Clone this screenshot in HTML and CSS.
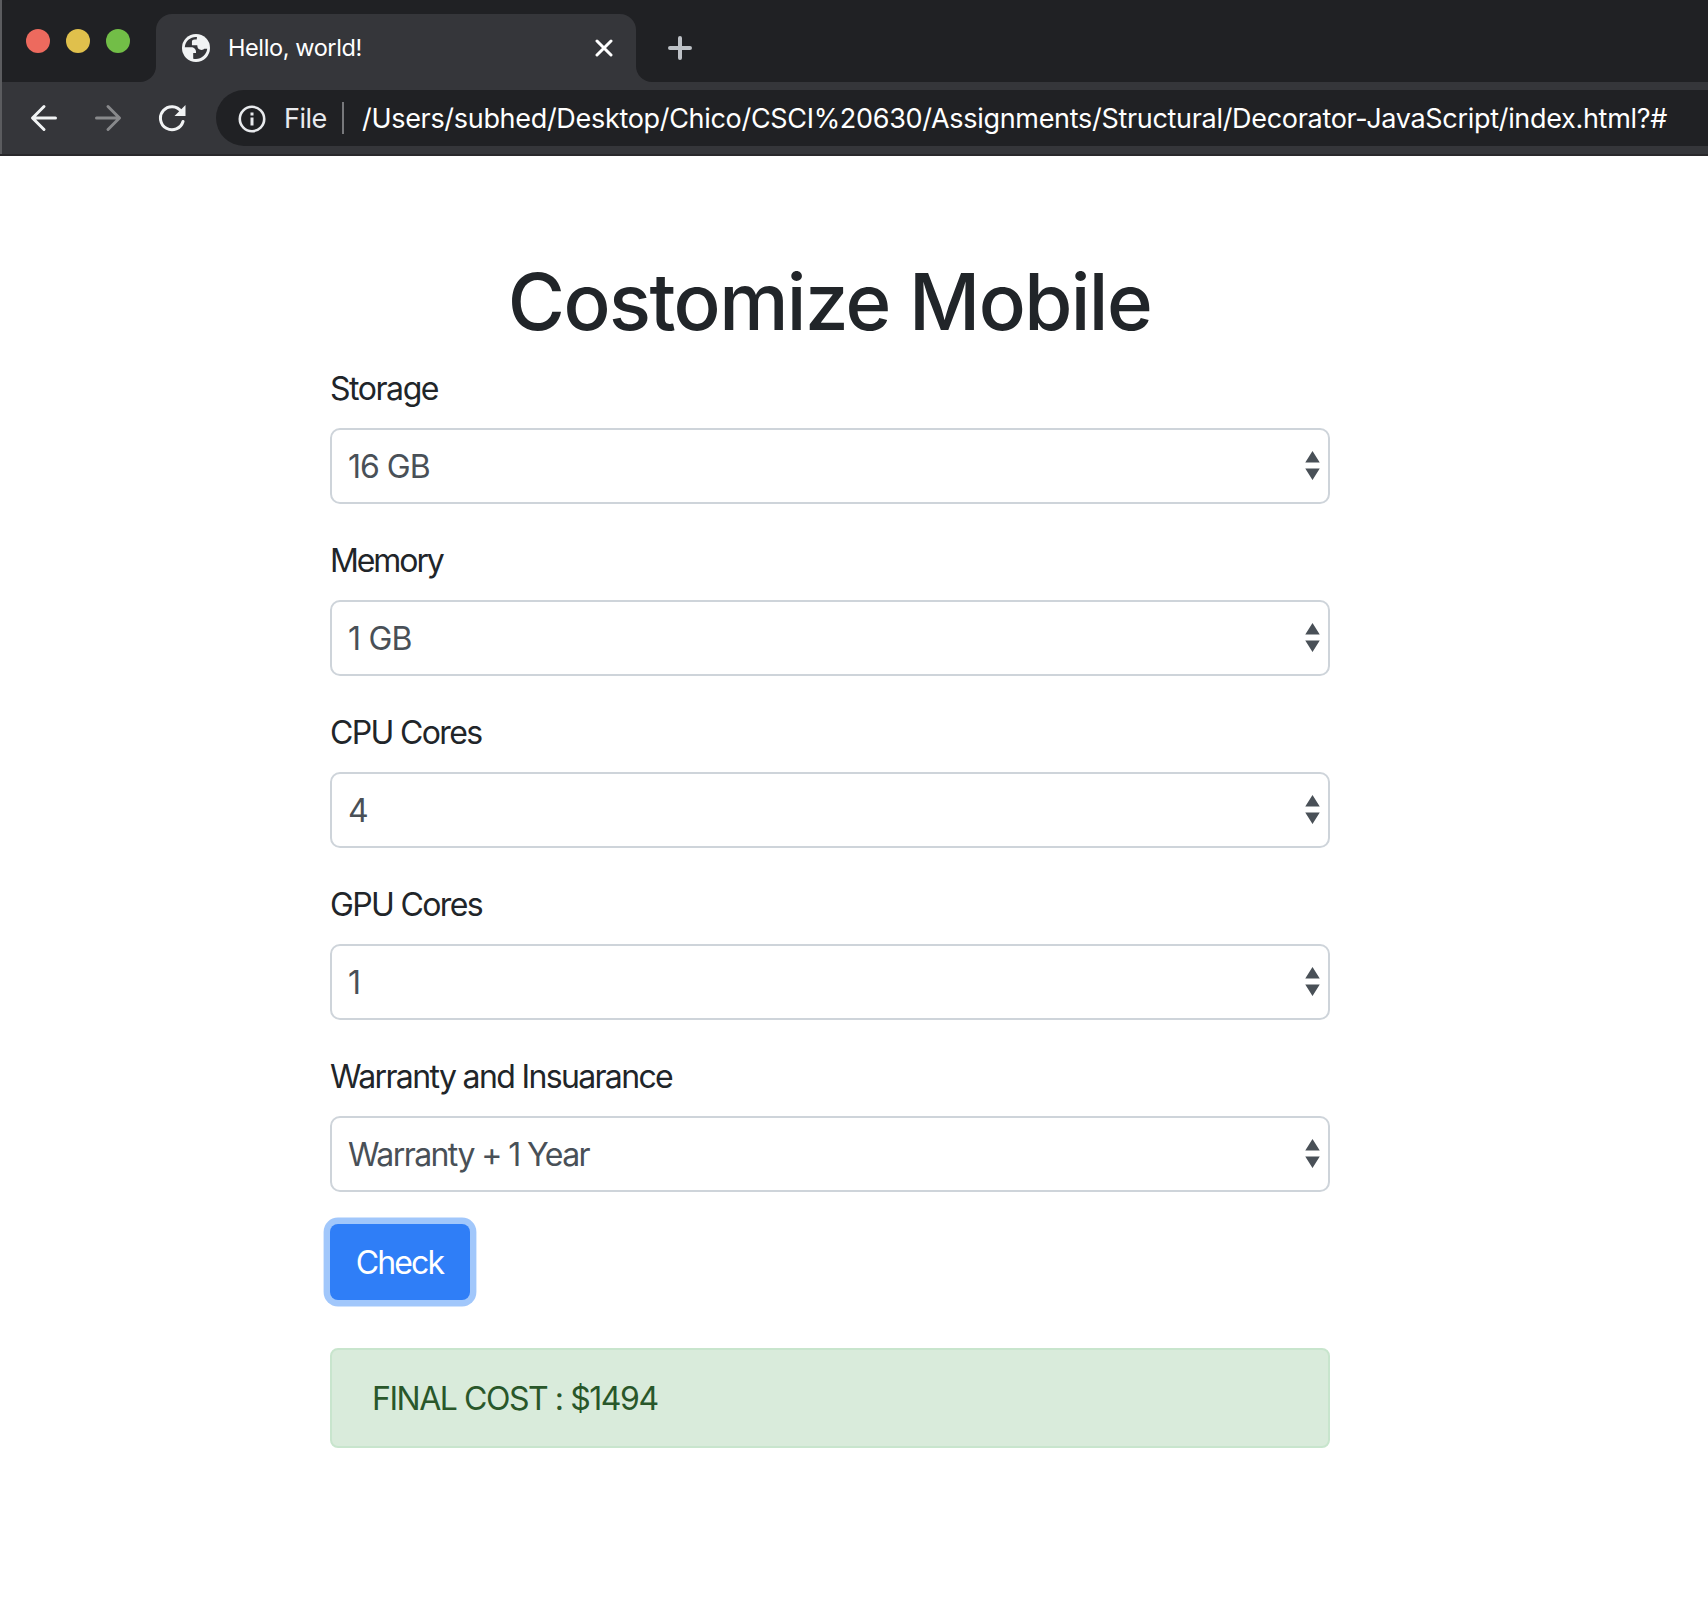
FILE: index.html
```html
<!DOCTYPE html>
<html lang="en">
<head>
<meta charset="utf-8">
<title>Hello, world!</title>
<link rel="stylesheet" href="styles.css">
</head>
<body>
<header class="browser">
  <div class="tabstrip">
    <div class="lights"><span class="light red"></span><span class="light yellow"></span><span class="light green"></span></div>
    <div class="tab">
      <svg class="globe" viewBox="2 2 20 20"><circle cx="12" cy="12" r="10" fill="#f1f3f4"/><path fill="#35363a" d="M12.700 4.100C8.300 3.700 4.400 6.800 4 11.400h4.500c2 0 3.500 1.300 3.500 3.200v1h-2v4c4.600 1.200 9.500-2 10-7h-2.100c-.4.500-1 .8-1.900.8-2 0-3.100-1-3.100-3.300H9.100V7.400c0-1 .8-1.500 2-1.500h1.400z"/></svg>
      <span class="tab-title">Hello, world!</span>
      <svg class="close" viewBox="0 0 18 18"><path d="M2 2l14 14M16 2L2 16" stroke="#fff" stroke-width="3" stroke-linecap="round"/></svg>
    </div>
    <svg class="plus" viewBox="0 0 24 24"><path d="M12 2v20M2 12h20" stroke="#bdc1c6" stroke-width="4" stroke-linecap="round"/></svg>
  </div>
  <div class="toolbar">
    <svg class="nav" viewBox="0 0 28 28"><path d="M25.500 14H3M14 2.500L2.500 14 14 25.500" fill="none" stroke="#f1f3f4" stroke-width="3" stroke-linecap="round" stroke-linejoin="round"/></svg>
    <svg class="nav" viewBox="0 0 28 28"><path d="M2.500 14H25M14 2.500L25.500 14 14 25.500" fill="none" stroke="#88898b" stroke-width="3" stroke-linecap="round" stroke-linejoin="round"/></svg>
    <svg class="nav" viewBox="0 0 28 28"><path d="M23.300 7.500A11.500 11.500 0 1 0 25 17.500" fill="none" stroke="#f1f3f4" stroke-width="3" stroke-linecap="round"/><path d="M27.500 1v11h-11z" fill="#f1f3f4"/></svg>
    <div class="omnibox">
      <svg class="info" viewBox="0 0 28 28"><circle cx="14" cy="14" r="12.200" fill="none" stroke="#e8eaed" stroke-width="2.600"/><path d="M14 12.500v8M14 7.500v3" stroke="#e8eaed" stroke-width="3"/></svg>
      <span class="scheme">File</span>
      <span class="divider"></span>
      <span class="url">/Users/subhed/Desktop/Chico/CSCI%20630/Assignments/Structural/Decorator-JavaScript/index.html?#</span>
    </div>
  </div>
</header>
<main class="page">
  <h1 class="heading">Costomize Mobile</h1>
  <form class="form">
    <div class="group">
      <label class="label loose" for="storage">Storage</label>
      <div class="field">
        <select class="select short" id="storage"><option>16 GB</option></select>
        <svg class="arrows" viewBox="0 0 15 30"><path d="M7.500 0L15 12H0zM7.500 30L0 18h15z"/></svg>
      </div>
    </div>
    <div class="group">
      <label class="label tight" for="memory">Memory</label>
      <div class="field">
        <select class="select shorter" id="memory"><option>1 GB</option></select>
        <svg class="arrows" viewBox="0 0 15 30"><path d="M7.500 0L15 12H0zM7.500 30L0 18h15z"/></svg>
      </div>
    </div>
    <div class="group">
      <label class="label" for="cpu">CPU Cores</label>
      <div class="field">
        <select class="select" id="cpu"><option>4</option></select>
        <svg class="arrows" viewBox="0 0 15 30"><path d="M7.500 0L15 12H0zM7.500 30L0 18h15z"/></svg>
      </div>
    </div>
    <div class="group">
      <label class="label" for="gpu">GPU Cores</label>
      <div class="field">
        <select class="select" id="gpu"><option>1</option></select>
        <svg class="arrows" viewBox="0 0 15 30"><path d="M7.500 0L15 12H0zM7.500 30L0 18h15z"/></svg>
      </div>
    </div>
    <div class="group">
      <label class="label" for="warranty">Warranty and Insuarance</label>
      <div class="field">
        <select class="select" id="warranty"><option>Warranty + 1 Year</option></select>
        <svg class="arrows" viewBox="0 0 15 30"><path d="M7.500 0L15 12H0zM7.500 30L0 18h15z"/></svg>
      </div>
    </div>
    <button class="check" type="button">Check</button>
  </form>
  <div class="alert">FINAL COST : $1494</div>
</main>
</body>
</html>
```
FILE: styles.css
```css
* { box-sizing: border-box; }
body {
  margin: 0;
  background: #fff;
  color: #212529;
  font: 32px/48px Inter, "Liberation Sans", sans-serif;
}
svg { display: block; flex: none; }

/* Browser chrome */
.browser {
  height: 156px;
  background: #35363a;
  border-bottom: 2px solid #29282b;
  box-shadow: inset 2px 0 #5b5c5f;
}
.tabstrip {
  display: flex;
  height: 82px;
  margin-left: 2px;
  background: linear-gradient(#35363a, #35363a) 138px 100% / 512px 16px no-repeat, #202124;
}
.lights {
  display: flex;
  gap: 16px;
  width: 154px;
  padding: 29px 24px;
  background: #202124;
  border-radius: 8px 0 16px 0;
}
.light { width: 24px; height: 24px; border-radius: 50%; }
.red { background: #ed6a5e; }
.yellow { background: #e0c04c; }
.green { background: #72be47; }
.tab {
  display: flex;
  align-items: center;
  width: 480px;
  margin-top: 14px;
  padding: 0 23px 0 26px;
  background: #35363a;
  border-radius: 16px 16px 0 0;
}
.globe { width: 28px; height: 28px; }
.tab-title {
  flex: 1;
  padding: 0 0 1px 18px;
  color: #fff;
  font-size: 23.5px;
  letter-spacing: -0.4px;
}
.close { width: 18px; height: 18px; }
.plus {
  box-sizing: content-box;
  width: 24px;
  height: 24px;
  padding: 36px 0 22px 32px;
  background: #202124;
  border-bottom-left-radius: 16px;
}
.toolbar {
  display: flex;
  align-items: center;
  height: 72px;
  padding-left: 30px;
}
.nav { width: 28px; height: 28px; margin: 0 36px 1px 0; }
.nav:nth-child(3) { margin-right: 30px; }
.omnibox {
  display: flex;
  align-items: center;
  flex: 1;
  height: 56px;
  padding-left: 22px;
  background: #202124;
  border-radius: 28px 0 0 28px;
  color: #fff;
  font-size: 27px;
  white-space: nowrap;
}
.info { width: 28px; height: 28px; margin-top: 1px; }
.scheme { width: 76px; padding: 2px 0 0 18px; color: #e8eaed; letter-spacing: -0.5px; }
.divider { width: 2px; height: 32px; background: #77787b; }
.url { margin-left: 18px; padding-top: 2px; letter-spacing: -0.31px; }

/* Form */
.page { width: 1000px; margin: 96px 0 0 330px; }
.heading {
  margin: 0 1px 13px 0;
  font-size: 78px;
  font-weight: 500;
  line-height: 99px;
  letter-spacing: -1.59px;
  text-align: center;
}
.group { margin-bottom: 32px; }
.label { display: block; margin-bottom: 15px; padding-top: 1px; letter-spacing: -1.65px; }
.tight { letter-spacing: -2.1px; }
.loose { letter-spacing: -1.45px; }
.field { position: relative; }
.select {
  display: block;
  width: 100%;
  height: 76px;
  padding: 1px 16px 0;
  appearance: none;
  background: #fff;
  border: 2px solid #ced4da;
  border-radius: 10px;
  color: #495057;
  font: inherit;
  letter-spacing: -1.58px;
}
.short { letter-spacing: -1px; }
.shorter { letter-spacing: -0.8px; }
.arrows {
  position: absolute;
  top: 23px;
  right: 10px;
  width: 15px;
  height: 29px;
  fill: #495057;
}
.check {
  display: block;
  width: 140px;
  height: 76px;
  padding: 1px 1px 0 0;
  background: #2f7ef7;
  border: 0;
  border-radius: 8px;
  box-shadow: 0 0 0 6.4px #a1c7fb;
  color: #fff;
  font: inherit;
  letter-spacing: -1.9px;
}
.alert {
  height: 100px;
  margin-top: 48px;
  padding: 25px 40px 23px;
  background: #d9ebdb;
  border: 2px solid #c8e5cd;
  border-radius: 8px;
  color: #29572a;
  letter-spacing: -1.45px;
}
```
